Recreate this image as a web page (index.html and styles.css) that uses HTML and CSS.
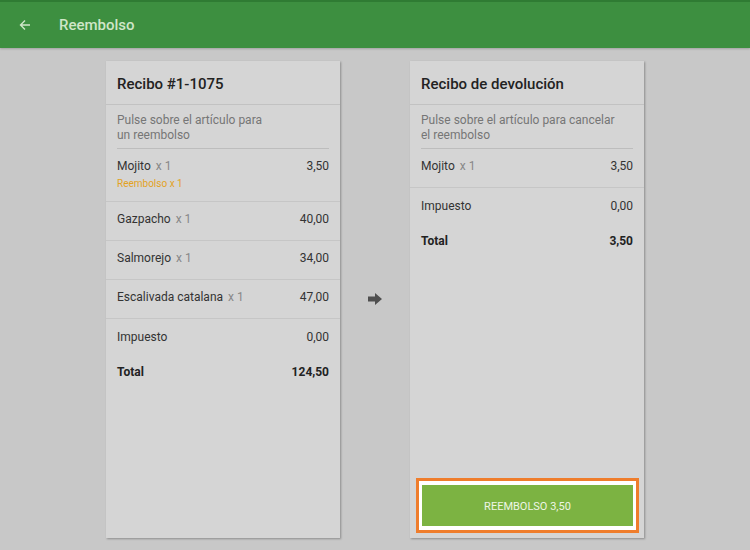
FILE: index.html
```html
<!DOCTYPE html>
<html lang="es">
<head>
  <meta charset="UTF-8">
  <title>Reembolso</title>
  <link rel="stylesheet" href="styles.css">
</head>
<body>

  <header class="topbar">
    <svg class="back" width="12" height="12" viewBox="0 0 12 12">
      <path d="M11 6H1.5M6 1.5L1.5 6L6 10.5" fill="none" stroke="currentColor" stroke-width="1.4"/>
    </svg>
    <span class="topbar-title">Reembolso</span>
  </header>

  <main class="content">
    <section class="card">
      <h2 class="card-title">Recibo #1-1075</h2>
      <p class="hint">Pulse sobre el artículo para<br>un reembolso</p>

      <div class="row row-refunded">
        <div class="row-main">
          <span>Mojito <span class="qty">x 1</span></span>
          <span>3,50</span>
        </div>
        <div class="refund-note">Reembolso x 1</div>
      </div>
      <div class="row">
        <div class="row-main"><span>Gazpacho <span class="qty">x 1</span></span><span>40,00</span></div>
      </div>
      <div class="row">
        <div class="row-main"><span>Salmorejo <span class="qty">x 1</span></span><span>34,00</span></div>
      </div>
      <div class="row">
        <div class="row-main"><span>Escalivada catalana <span class="qty">x 1</span></span><span>47,00</span></div>
      </div>

      <div class="totals">
        <div class="row-main"><span>Impuesto</span><span>0,00</span></div>
        <div class="row-main total"><span>Total</span><span>124,50</span></div>
      </div>
    </section>

    <div class="arrow">
      <svg width="14" height="12" viewBox="0 0 14 12">
        <path d="M0 3.5H7V0L14 6L7 12V8.5H0Z" fill="#4f4f4f"/>
      </svg>
    </div>

    <section class="card">
      <h2 class="card-title">Recibo de devolución</h2>
      <p class="hint">Pulse sobre el artículo para cancelar<br>el reembolso</p>

      <div class="row">
        <div class="row-main"><span>Mojito <span class="qty">x 1</span></span><span>3,50</span></div>
      </div>

      <div class="totals">
        <div class="row-main"><span>Impuesto</span><span>0,00</span></div>
        <div class="row-main total"><span>Total</span><span>3,50</span></div>
      </div>

      <div class="card-footer">
        <div class="focus-ring">
          <button class="refund-btn">REEMBOLSO 3,50</button>
        </div>
      </div>
    </section>
  </main>

</body>
</html>
```

FILE: styles.css
```css
body {
  font-family: Roboto, "Liberation Sans", sans-serif;
  background-color: #c8c8c8;
  margin: 0;
  padding: 0;
  height: 550px;
  overflow: hidden;
  color: #2a2a2a;
}

.topbar {
  height: 46px;
  background-color: #3d8f40;
  border-top: 2px solid #2f7b33;
  display: flex;
  align-items: center;
  padding-left: 19px;
  color: #cfe6c8;
  box-shadow: 0 1px 2px rgba(0, 0, 0, 0.2);
}

.topbar-title {
  margin-left: 28px;
  font-size: 15px;
  font-weight: 500;
  margin-top: -1px;
}

.content {
  display: flex;
  justify-content: center;
  padding-top: 13px;
  height: 477px;
}

.card {
  width: 234px;
  background-color: #d5d5d5;
  box-shadow: 1px 1px 2px rgba(0, 0, 0, 0.3);
  display: flex;
  flex-direction: column;
}

.card-title {
  margin: 0;
  height: 43px;
  line-height: 47px;
  padding: 0 11px;
  font-size: 15px;
  font-weight: 500;
  color: #222;
  border-bottom: 1px solid #c2c2c2;
}

.hint {
  margin: 0 11px;
  padding: 8px 0 5px;
  font-size: 12px;
  line-height: 15px;
  color: #767676;
  border-bottom: 1px solid #bdbdbd;
}

.row {
  padding: 10px 11px 13px;
  border-bottom: 1px solid #c6c6c6;
}

.row-refunded {
  padding-bottom: 11px;
}

.row-main {
  display: flex;
  justify-content: space-between;
  font-size: 12px;
  line-height: 15px;
  color: #333;
}

.qty {
  color: #888;
  margin-left: 2px;
}

.refund-note {
  margin-top: 3px;
  font-size: 10px;
  line-height: 13px;
  color: #e3a21f;
}

.totals {
  padding: 11px 11px 0;
}

.total {
  margin-top: 20px;
  font-weight: bold;
  color: #222;
}

.arrow {
  width: 70px;
  display: flex;
  justify-content: center;
  align-items: center;
  padding-bottom: 2px;
}

.card-footer {
  margin-top: auto;
  padding: 0 5px 5px 6px;
}

.focus-ring {
  border: 3px solid #ef7d2c;
  background: #fff;
  padding: 4px 3px;
}

.refund-btn {
  width: 100%;
  height: 41px;
  padding-top: 3px;
  border: none;
  background-color: #7cb342;
  color: #eef6e4;
  font-family: Roboto, "Liberation Sans", sans-serif;
  font-size: 11px;
  display: block;
}
```
